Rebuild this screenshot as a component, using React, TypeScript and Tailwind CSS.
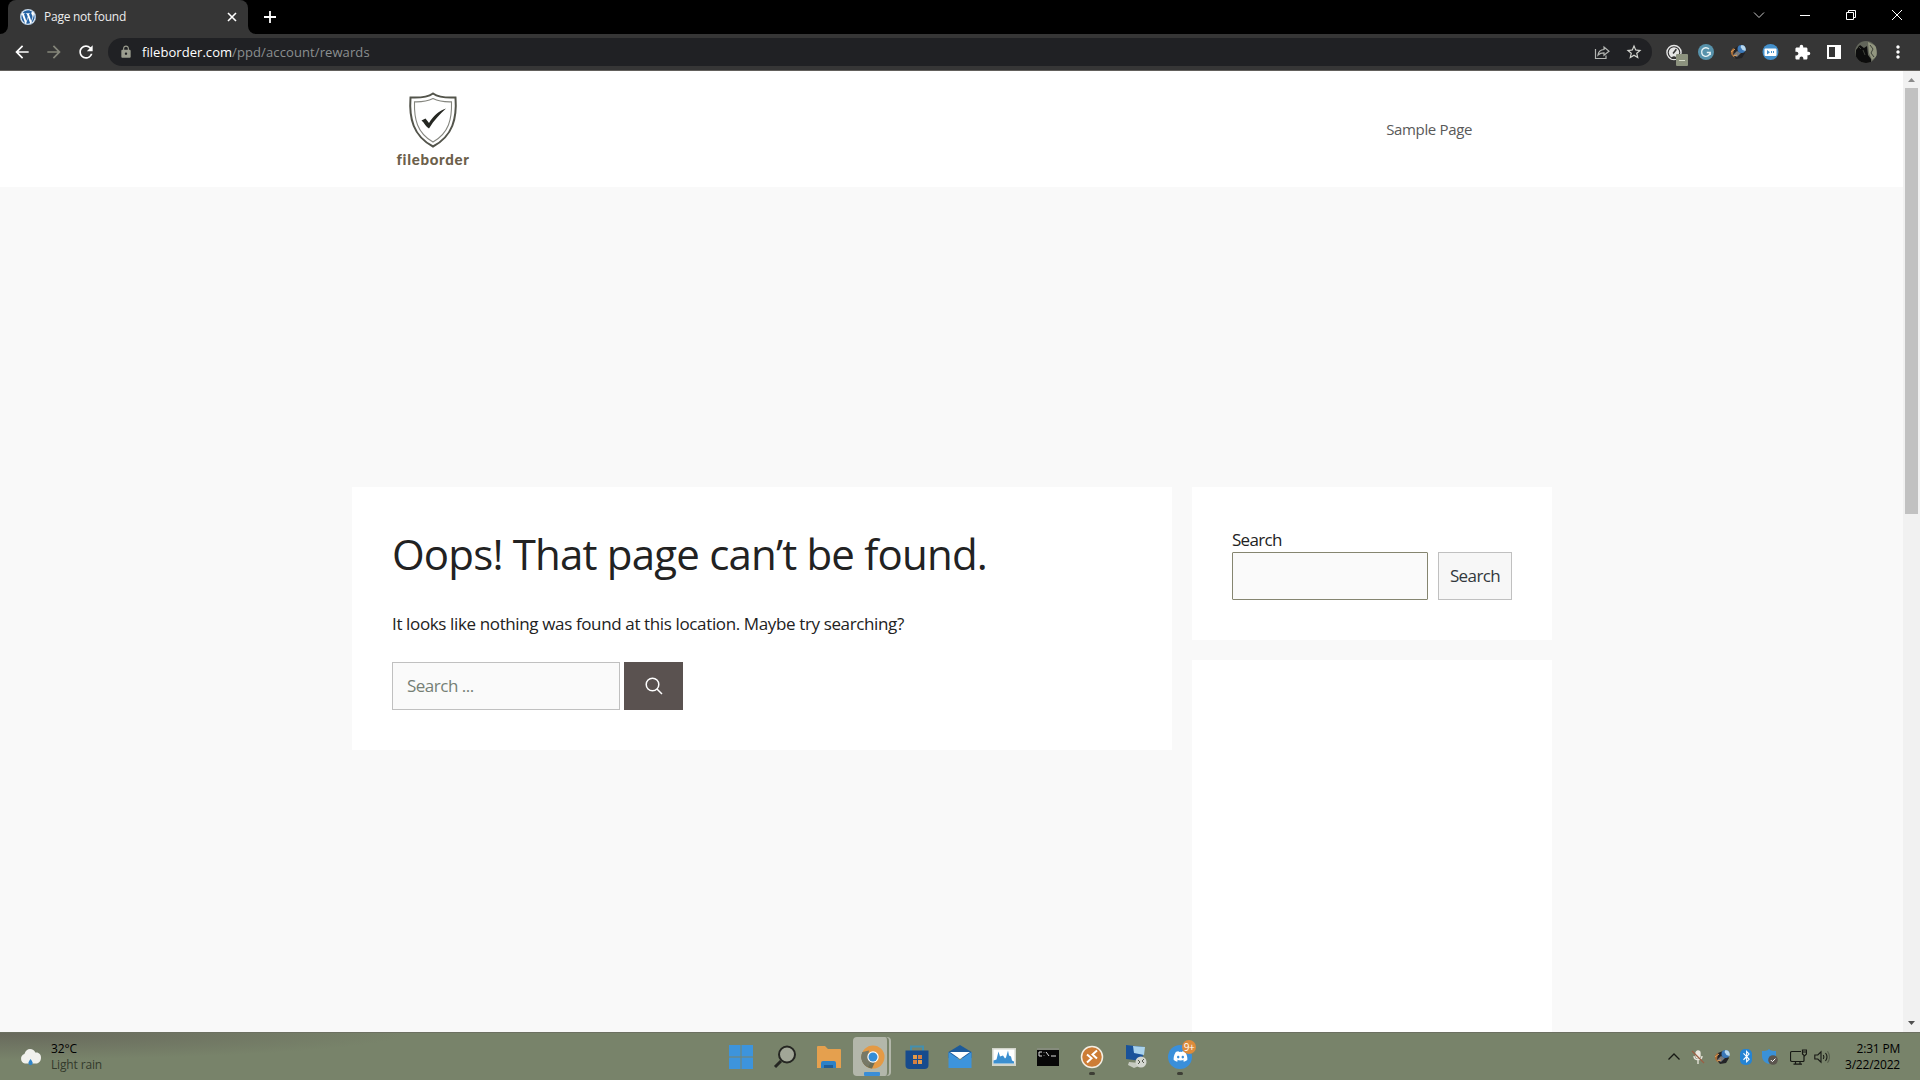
import type { ReactNode } from "react";
import { FaWordpress, FaDiscord, FaBluetoothB } from "react-icons/fa";
import { MdArrowBack, MdArrowForward, MdRefresh, MdExtension, MdLock, MdStarBorder, MdMoreVert } from "react-icons/md";

const Cell = ({ children }: { children?: ReactNode }) => (
    <div className="flex h-9 w-8 shrink-0 items-center justify-center">{children}</div>
);

const WindowButton = ({ children }: { children: ReactNode }) => (
    <button className="flex h-[29px] w-[46px] items-center justify-center">
        <svg width="12" height="12" viewBox="0 0 12 12" fill="none" stroke="#fff" strokeWidth="1">{children}</svg>
    </button>
);

// Small bee-like download manager icon, used in the toolbar and in the tray
const DownloaderIcon = () => (
    <svg width="17" height="16" viewBox="0 0 17 16">
        <path d="M1 7c1-3 4-4 6-3l3 6-3 4C4 14 0 11 1 7z" fill="#a56a35" />
        <path d="M4 4l5-2 6 7-3 5-6 1-3-4z" fill="#232427" />
        <path d="M3 11l4-4 4 2-4 4z" fill="#77797c" />
        <circle cx="11.500" cy="5" r="4" fill="#3b78b8" />
        <path d="M11.500 1c3 0 5 3 4 6l-3-1-2-3z" fill="#b9d9ef" />
        <path d="M1 8l4-3M3 12l4-1" stroke="#e1a15b" strokeWidth="1" />
    </svg>
);

function TitleBar() {
    return (
        <div className="flex h-[34px] justify-between bg-black">
            <div className="flex">
                <div className="flex w-2 items-end bg-black">
                    <div className="h-2 w-2 bg-[#363636]"><div className="h-2 w-2 rounded-br-lg bg-black" /></div>
                </div>
                <div className="flex w-60 items-center rounded-t-lg bg-[#363636] pl-3 pr-[10px] pt-0 pb-[6px]">
                    <div className="mt-[6px] flex h-4 w-4 items-center justify-center rounded-full bg-white">
                        <FaWordpress className="h-4 w-4 text-[#2563a5]" />
                    </div>
                    <span className="mt-[5px] ml-2 flex-1 whitespace-nowrap text-[12px] tracking-[-0.25px] text-[#ededed]">Page not found</span>
                    <svg className="mt-[6px]" width="12" height="12" viewBox="0 0 12 12" stroke="#fff" strokeWidth="1.6"><path d="M2 2l8 8M10 2l-8 8" /></svg>
                </div>
                <div className="flex w-2 items-end bg-black">
                    <div className="h-2 w-2 bg-[#363636]"><div className="h-2 w-2 rounded-bl-lg bg-black" /></div>
                </div>
                <button className="flex h-[34px] w-7 items-center justify-center">
                    <svg width="14" height="14" viewBox="0 0 14 14" stroke="#fff" strokeWidth="1.8"><path d="M7 1v12M1 7h12" /></svg>
                </button>
            </div>
            <div className="flex">
                <WindowButton><path d="M1 3.5l5 5 5-5" stroke="#c9c9c9" /></WindowButton>
                <WindowButton><path d="M1 6.5h10" /></WindowButton>
                <WindowButton><path d="M1.500 3.500h7v7h-7zM3.500 3V1.500h7v7H9" /></WindowButton>
                <WindowButton><path d="M1 1l10 10M11 1L1 11" /></WindowButton>
            </div>
        </div>
    );
}

function Toolbar() {
    return (
        <div className="flex h-[37px] items-center border-b border-[#62605c] bg-[#363636] pl-[6px] pr-[6px]">
            <Cell><MdArrowBack className="h-5 w-5 text-white" /></Cell>
            <Cell><MdArrowForward className="h-5 w-5 text-[#85867a]" /></Cell>
            <Cell><MdRefresh className="h-5 w-5 text-white" /></Cell>
            <div className="ml-[6px] flex h-7 flex-1 items-center rounded-full bg-[#202124] pl-[11px]">
                <MdLock className="h-[14px] w-[14px] text-[#9b9d8f]" />
                <p className="ml-[9px] flex-1 whitespace-nowrap text-[13px] leading-none tracking-[0.1px] text-[#8b8f90]">
                    <span className="tracking-[0.05px] text-white">fileborder.com</span>/ppd/account/rewards
                </p>
                <Cell>
                    <svg width="16" height="16" viewBox="0 0 16 16" fill="none" stroke="#b3b5b2" strokeWidth="1.2">
                        <path d="M1.500 5v9.500h10.500v-3M4 11c.4-3.300 2.500-5.200 6-5.500V3l5 4.300-5 4V8.800C7.500 8.800 5.500 9.500 4 11z" />
                    </svg>
                </Cell>
                <Cell><MdStarBorder className="h-[18px] w-[18px] text-[#d3d5d0]" /></Cell>
                <div className="w-[2px]" />
            </div>
            <div className="ml-[6px] flex">
                <Cell>
                    <div className="relative flex h-4 w-4 items-center justify-center">
                        <svg width="17" height="17" viewBox="0 0 17 17" fill="none">
                            <circle cx="8.500" cy="8.500" r="7.500" stroke="#e5e5e5" strokeWidth="1.500" />
                            <circle cx="8.500" cy="8.500" r="5.500" fill="#e5e5e5" />
                            <path d="M7.500 9.500l3.500-4.500" stroke="#333" strokeWidth="1.700" />
                            <path d="M6 13.500q2.500-2 5 0v2H6z" fill="#363636" />
                        </svg>
                        <div className="absolute top-[10px] left-[10px] flex h-3 w-3 items-center justify-center rounded-[1px] bg-[#8c927e]">
                            <div className="h-px w-[6px] bg-[#d6dcc9]" />
                        </div>
                    </div>
                </Cell>
                <Cell>
                    <svg width="16" height="16" viewBox="0 0 16 16" fill="none">
                        <circle cx="8" cy="8" r="8" fill="#5792ab" />
                        <path d="M11 5A4.300 4.300 0 1 0 12.200 8.500H8.800M12.200 8.500V11" stroke="#e6f2f4" strokeWidth="1.400" />
                    </svg>
                </Cell>
                <Cell><DownloaderIcon /></Cell>
                <Cell>
                    <svg width="17" height="16" viewBox="0 0 17 16">
                        <circle cx="8.500" cy="8" r="8" fill="#4490cb" />
                        <rect x="2.500" y="4.500" width="12" height="7.500" rx="1" fill="#fff" />
                        <path d="M5 6l3 2.200L5 10.500z" fill="#4490cb" />
                        <path d="M9.500 7v2M11.500 7v2" stroke="#4490cb" />
                    </svg>
                </Cell>
                <Cell><MdExtension className="h-[17px] w-[17px] text-white" /></Cell>
                <Cell>
                    <svg width="14" height="14" viewBox="0 0 14 14"><path d="M0 0h14v14H0z" fill="#fff" /><path d="M2 2h6v10H2z" fill="#363636" /></svg>
                </Cell>
                <Cell>
                    <svg width="22" height="22" viewBox="0 0 22 22">
                        <defs><clipPath id="avatar"><circle cx="11" cy="11" r="11" /></clipPath></defs>
                        <g clipPath="url(#avatar)">
                            <path d="M0 0h22v22H0z" fill="#62655a" />
                            <path d="M1 9l4-5 4 3 3-2 1 9 3 4v4H0z" fill="#0c0c0c" />
                            <path d="M13 1l8 4 1 10-5 4-3-7z" fill="#92967f" />
                            <path d="M15 4l3 4-2 4 3 4M3 5l3 3M8 9l2 5" stroke="#3d4039" fill="none" />
                        </g>
                    </svg>
                </Cell>
                <Cell><MdMoreVert className="h-5 w-5 text-white" /></Cell>
            </div>
        </div>
    );
}

function Logo() {
    return (
        <div className="flex w-[82px] flex-col items-center">
            <svg width="50" height="56" viewBox="0 0 50 56" fill="none">
                <path d="M25 1.500C20 5 12 6 2.500 5.500C1 26 5 44 25 54.500C45 44 49 26 47.500 5.500C38 6 30 5 25 1.500z" stroke="#53544b" strokeWidth="2" />
                <path d="M25 6.500C20 9 13 10 6.500 9.800C6 27 9 41 25 50C41 41 44 27 43.500 9.800C37 10 30 9 25 6.500z" stroke="#85867f" strokeWidth="1.100" />
                <path d="M13.500 28.500l4-2 3.500 4.500C25 24 31 19 38 16.500C32 22 26 28 21 36.500c-3-1.500-4.500-5.500-7.500-8z" fill="#252722" />
            </svg>
            <span className="mt-[2px] font-['Lato',sans-serif] text-[15px] leading-[18px] font-black tracking-[0.7px] text-[#6c604b]">fileborder</span>
        </div>
    );
}

function Page() {
    return (
        <div className="flex min-h-0 flex-1 bg-[#f9f9f9]">
            <div className="flex min-w-0 flex-1 flex-col overflow-hidden">
                <header className="flex h-[116px] shrink-0 items-start justify-between bg-white pl-[392px] pr-[431px] pt-[21px]">
                    <Logo />
                    <a className="mt-[26px] text-[15px] leading-[22px] tracking-[-0.35px] text-[#595959]">Sample Page</a>
                </header>
                <div className="mt-[300px] flex min-h-0 flex-1 items-start gap-5 pl-[352px] text-[#222]">
                    <main className="h-[263px] w-[820px] bg-white p-10">
                        <h1 className="h-[54px] whitespace-nowrap font-['Open_Sans',sans-serif] text-[42px] leading-[53px] tracking-[-0.81px]">Oops! That page can’t be found.</h1>
                        <p className="mt-[30px] h-[26px] whitespace-nowrap text-[17px] leading-[26px] tracking-[-0.37px]">It looks like nothing was found at this location. Maybe try searching?</p>
                        <form className="mt-[25px] flex gap-1">
                            <input placeholder="Search ..." className="h-12 w-[228px] border border-[#c0c0c0] bg-[#fafafa] px-[14px] pb-[2px] text-[17px] tracking-[-0.5px] placeholder:text-[#757f75]" />
                            <button type="button" className="flex h-12 w-[59px] items-center justify-center bg-[#5a5250]">
                                <svg width="18" height="18" viewBox="0 0 18 18" fill="none" stroke="#fff" strokeWidth="1.500">
                                    <circle cx="7.500" cy="7.500" r="6.300" /><path d="M12 12l5 5" />
                                </svg>
                            </button>
                        </form>
                    </main>
                    <aside className="flex h-full w-[360px] flex-col gap-5">
                        <div className="h-[153px] shrink-0 bg-white px-10 pt-10">
                            <label className="block h-[25px] text-[17px] leading-[26px] tracking-[-0.7px]">Search</label>
                            <div className="flex gap-[10px]">
                                <input className="h-12 w-[196px] rounded-[1px] border border-[#858570] bg-[#fafafa]" />
                                <button className="h-12 w-[74px] border border-[#c0c0c0] bg-[#f7f7f7] text-[17px] tracking-[-0.6px] text-[#32373c]">Search</button>
                            </div>
                        </div>
                        <div className="flex-1 bg-white" />
                    </aside>
                </div>
            </div>
            <div className="flex w-[17px] flex-col items-center bg-[#f1f1f1]">
                <svg className="shrink-0" width="17" height="17" viewBox="0 0 17 17"><path d="M5 11l3.500-4 3.500 4z" fill="#8a8a8a" /></svg>
                <div className="h-[426px] w-[13px] bg-[#c1c1c1]" />
                <div className="flex-1" />
                <svg className="shrink-0" width="17" height="17" viewBox="0 0 17 17"><path d="M5 6l3.500 4L12 6z" fill="#505050" /></svg>
            </div>
        </div>
    );
}

const Task = ({ children, running }: { children: ReactNode; running?: boolean }) => (
    <div className="relative flex h-[47px] w-[44.100px] items-center justify-center">
        {children}
        {running && <div className="absolute bottom-[5px] left-[19px] h-[3px] w-[6px] rounded-full bg-[#3d3e35]" />}
    </div>
);

function Taskbar() {
    return (
        <div className="grid h-12 grid-cols-[1fr_484px_1fr] border-t border-[#6c7061] bg-[#78836a] text-black">
            <div className="flex items-center bg-radial-[at_0%_0%] from-[#68695c] to-[#78836a] to-40% pl-[19px]">
                <svg width="24" height="20" viewBox="0 0 24 20">
                    <path d="M6 16.500a5 5 0 0 1-.6-9.600C6.500 3.500 8.600 2 11 2c2.600 0 4.500 1.300 5.300 3.500C20 5 22 7.500 22 10.500c0 3.500-2 6-5 6z" fill="#f1f1ed" />
                    <path d="M11.500 12c1.500 2 2.200 3 2.200 4a2.100 2.100 0 0 1-4.300 0c0-1 .8-2 2.100-4z" fill="#2f85c9" />
                </svg>
                <div className="ml-2 text-[12px] leading-4 tracking-[-0.15px]">
                    <p>32°C</p>
                    <p className="text-[#333a2c]">Light rain</p>
                </div>
            </div>

            <div className="flex pl-px">
                <Task>
                    <svg width="24" height="24" viewBox="0 0 24 24" fill="#3d94dc"><path d="M0 0h11.500v11.500H0zM12.500 0H24v11.500H12.500zM0 12.500h11.500V24H0zM12.500 12.500H24V24H12.500z" /></svg>
                </Task>
                <Task>
                    <svg width="24" height="24" viewBox="0 0 24 24" fill="none" stroke="#252622">
                        <circle cx="14" cy="9.500" r="8" fill="#a1a697" strokeWidth="2" /><path d="M8 16l-6 6" strokeWidth="3" />
                    </svg>
                </Task>
                <Task>
                    <svg width="24" height="24" viewBox="0 0 24 24">
                        <path d="M0 2q0-1 1-1h7l3 3h12q1 0 1 1v18H0z" fill="#e5a04e" />
                        <path d="M4 23v-5q0-2 2-2h11q2 0 2 2v5z" fill="#2c81c7" />
                        <path d="M7 20h9v3H7z" fill="#1e5c97" />
                    </svg>
                </Task>
                <Task>
                    <div className="absolute top-1 left-[4px] h-[39px] w-[36px] rounded-[4px] bg-[#b3b7aa]" />
                    <div className="absolute top-1 left-[2px] h-[39px] w-[36px] rounded-[4px] border-r-2 border-[#78836a] bg-[#b3b7aa]" />
                    <svg className="relative" width="24" height="24" viewBox="0 0 24 24">
                        <circle cx="12" cy="12" r="11.500" fill="#e49a45" />
                        <path d="M1.500 7A11.500 11.500 0 0 0 11 23.500L14 17l-6-1z" fill="#6b6e58" />
                        <path d="M1.500 7L8 5.500 7 12l3 5-3 5C1 19-1 13 1.500 7z" fill="#777967" />
                        <circle cx="12" cy="12" r="5.700" fill="#fff" /><circle cx="12" cy="12" r="4.500" fill="#358dd6" />
                    </svg>
                    <div className="absolute bottom-[4px] left-[13px] h-1 w-4 rounded-[1px] bg-[#3a8ed6]" />
                </Task>
                <Task>
                    <svg width="24" height="24" viewBox="0 0 24 24">
                        <path d="M6 7V1.500h12V7" fill="none" stroke="#438fae" strokeWidth="2" />
                        <path d="M.5 5.500h23V20q0 4-4 4h-15q-4 0-4-4z" fill="#174b8d" />
                        <path d="M8 10h4v4H8zM13 15h4v4h-4z" fill="#e39a4a" /><path d="M13 10h4v4h-4zM8 15h4v4H8z" fill="#d47f42" />
                    </svg>
                </Task>
                <Task>
                    <svg width="24" height="24" viewBox="0 0 24 24">
                        <path d="M.5 7L12 0l11.500 7v6H.5z" fill="#1d5a99" />
                        <path d="M.5 7L12 15l11.500-8v16H.5z" fill="#3d94dc" />
                        <path d="M2 7h20l-10 7z" fill="#fff" />
                    </svg>
                </Task>
                <Task>
                    <svg width="24" height="20" viewBox="0 0 24 20">
                        <path d="M0 1h24v18H0z" fill="#d2d5cb" /><path d="M1.500 2.500h21v14h-21z" fill="#fff" />
                        <path d="M1.500 16.500v-3l3-1 2-8 1.500 5 3-1 2 3 1-1 2-7 1 5 2 1 1 4 2 1v2z" fill="#3b8fd0" />
                    </svg>
                </Task>
                <Task>
                    <svg width="22" height="18" viewBox="0 0 22 18">
                        <path d="M0 0h22v18H0z" fill="#070707" /><path d="M0 0h22v2H0z" fill="#858b7c" />
                        <path d="M5 4H2v4h3M7 4v.5M7 7v.5M9 4l3 4M14 8h5" stroke="#ddd" fill="none" />
                    </svg>
                </Task>
                <Task running>
                    <svg width="24" height="24" viewBox="0 0 24 24" fill="none">
                        <circle cx="12" cy="12" r="10.500" fill="#cd7d36" stroke="#f4eee3" strokeWidth="1.500" />
                        <path d="M7 9.500l4.500 3.800L7 17.500M17 5.500l-4.500 4 4.500 4" stroke="#fff" strokeWidth="2" />
                    </svg>
                </Task>
                <Task>
                    <svg width="24" height="24" viewBox="0 0 24 24">
                        <path d="M2 0l18 2-2 14-16-2z" fill="#19529a" /><path d="M9 1l12 1-1 8-10-2z" fill="#a9d2ec" />
                        <path d="M5 17l10 1v3l-5 2-6-3z" fill="#c6cac0" />
                        <circle cx="17" cy="17" r="5.500" fill="#d3d6cf" /><path d="M14 15l2 2-2 2M20 14l-2 2 2 2" stroke="#53574d" fill="none" />
                    </svg>
                </Task>
                <Task running>
                    <div className="flex h-6 w-6 items-center justify-center rounded-full bg-[#3a8fda]"><FaDiscord className="h-[15px] w-[15px] text-white" /></div>
                    <div className="absolute top-[7px] left-[24px] flex h-[14px] w-[14px] items-center justify-center rounded-full bg-[#dc8b3b] text-[10px] leading-none tracking-[-0.5px] text-white">9+</div>
                </Task>
            </div>

            <div className="flex items-center justify-end pr-5">
                <svg width="12" height="7" viewBox="0 0 12 7" fill="none" stroke="#171914" strokeWidth="1.300"><path d="M.5 6.500L6 1l5.500 5.500" /></svg>
                <svg className="ml-[11px]" width="14" height="14" viewBox="0 0 14 14" fill="none" stroke="#ece8df" strokeWidth="1.300">
                    <rect x="5" y="1" width="4" height="7" rx="2" fill="#ece8df" /><path d="M3 6c0 5 8 5 8 0M7 10v4" /><path d="M1 1l12 12" stroke="#9c5e43" />
                </svg>
                <div className="ml-[9px]"><DownloaderIcon /></div>
                <div className="ml-[9px] flex h-4 w-3 items-center justify-center rounded-[5px] bg-[#2584d4]"><FaBluetoothB className="h-[13px] w-[9px] text-white" /></div>
                <svg className="ml-[10px]" width="16" height="16" viewBox="0 0 16 16">
                    <path d="M7 0c2 2 4 2 7 2v5c0 4-3 7-7 8-4-1-7-4-7-8V2c3 0 5 0 7-2z" fill="#3a91d7" />
                    <circle cx="11" cy="11" r="4.800" fill="#5b554e" /><path d="M8.800 11l1.600 1.600 3-3" stroke="#fff" fill="none" />
                </svg>
                <svg className="ml-[12px]" width="17" height="16" viewBox="0 0 17 16" fill="none" stroke="#171914" strokeWidth="1.200">
                    <path d="M11 2.500H2q-1.500 0-1.500 1.500v7q0 1.500 1.500 1.500h11q1 0 1-1V7M5.500 12.500V15M10 12.500V15M3.500 15.200h8.500M12.500 1h4v4l-2 2-2-2zM12.500 3h4" />
                </svg>
                <svg className="ml-[7px]" width="16" height="14" viewBox="0 0 16 14" fill="none" stroke="#171914" strokeWidth="1.100">
                    <path d="M.8 5h3L7 1.800v10.400L3.800 9h-3zM9.300 5q1.300 2 0 4M11.500 3q3 4 0 8" /><path d="M13.500 1.200q4 5.800 0 11.600" stroke="#565d4c" />
                </svg>
                <div className="w-[70px] text-right text-[12px] leading-4 tracking-[-0.2px] whitespace-nowrap">
                    <p>2:31 PM</p>
                    <p>3/22/2022</p>
                </div>
            </div>
        </div>
    );
}

export default function App() {
    return (
        <div className="flex h-[1080px] w-[1920px] flex-col overflow-hidden font-['Open_Sans','Noto_Sans',sans-serif]">
            <TitleBar />
            <Toolbar />
            <Page />
            <Taskbar />
        </div>
    );
}
